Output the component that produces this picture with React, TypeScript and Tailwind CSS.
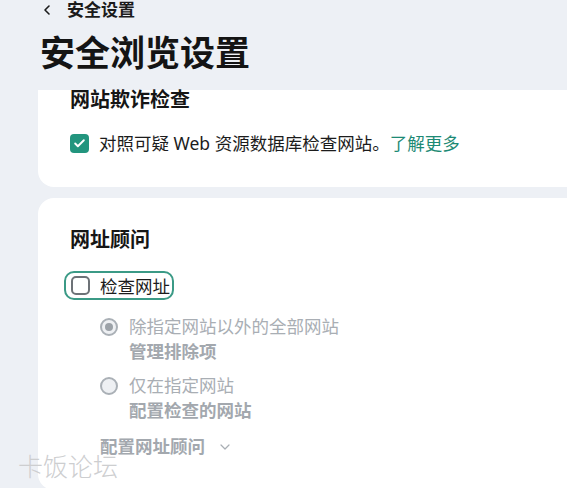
import { Check, ChevronDown, ChevronLeft } from 'lucide-react';

const font = 'font-["Noto_Sans","Noto_Sans_CJK_SC",sans-serif]';

function RadioOption({ label, sub, checked }: { label: string; sub: string; checked?: boolean }) {
  return (
    <div className="flex flex-col">
      <div className="flex items-center h-[25px]">
        <span className="w-[18px] h-[18px] rounded-full border-2 border-[#aab0b6] bg-[#eef0f3] flex items-center justify-center">
          {checked && <span className="w-[8px] h-[8px] rounded-full bg-[#9ca2a8]" />}
        </span>
        <span className="ml-[11px] text-[17.5px] text-[#a9aeb4] leading-[25px]">{label}</span>
      </div>
      <div className="pl-[29px] h-[25px] text-[17.5px] font-bold text-[#a3a8ae] leading-[25px]">{sub}</div>
    </div>
  );
}

export default function App() {
  return (
    <div className={`relative h-[488px] overflow-hidden bg-[#edf0f5] ${font}`}>
      <div className="pl-[40px]">
        <div className="flex items-center h-[20px] text-[#1b1b1b]">
          <ChevronLeft size={16} strokeWidth={2.4} className="-ml-[1px]" />
          <span className="ml-[12px] text-[17px] font-bold leading-[20px]">安全设置</span>
        </div>
        <h1 className="mt-[11px] text-[35px] font-bold leading-[44px] text-[#141414]">
          安全浏览设置
        </h1>
      </div>

      <div className="ml-[38px] w-[600px] mt-[15px]">
        <div className="bg-white rounded-b-2xl pl-[32px] h-[97px]">
          <h2 className="text-[20px] font-bold leading-[20px] text-[#161616]">网站欺诈检查</h2>
          <div className="mt-[21px] flex items-center h-[24px]">
            <span className="w-[19px] h-[19px] rounded-[4px] bg-[#22957e] flex items-center justify-center">
              <Check size={13} strokeWidth={3.5} className="text-white" />
            </span>
            <span className="ml-[10px] text-[17.5px] leading-[24px] text-[#1c1c1c]">
              对照可疑 Web 资源数据库检查网站。
              <span className="text-[#1d8a75]">了解更多</span>
            </span>
          </div>
        </div>

        <div className="mt-[11px] bg-white rounded-2xl pl-[32px] pt-[30px] h-[292px]">
          <h2 className="text-[20px] font-bold leading-[24px] text-[#161616]">网址顾问</h2>
          <div className="mt-[19px] -ml-[6px] inline-flex items-center h-[29px] pl-[5px] pr-[2px] rounded-[10px] border-2 border-[#3b9a86]">
            <span className="w-[19px] h-[19px] rounded-[5px] border-2 border-[#6d7277] bg-white" />
            <span className="ml-[10px] text-[17.5px] leading-[24px] text-[#1c1c1c]">检查网址</span>
          </div>
          <div className="pl-[30px] mt-[13px] flex flex-col gap-[9px]">
            <RadioOption label="除指定网站以外的全部网站" sub="管理排除项" checked />
            <RadioOption label="仅在指定网站" sub="配置检查的网站" />
          </div>
          <div className="pl-[30px] mt-[11px] flex items-center h-[25px] text-[#a3a8ae]">
            <span className="text-[17.5px] font-bold leading-[25px]">配置网址顾问</span>
            <ChevronDown size={16} strokeWidth={1.8} className="ml-[12px] text-[#a9aeb4]" />
          </div>
        </div>
      </div>

      <div className="absolute left-[18px] top-[451px] text-[25px] leading-[30px] font-light text-[#cdced0]">
        卡饭论坛
      </div>
    </div>
  );
}
